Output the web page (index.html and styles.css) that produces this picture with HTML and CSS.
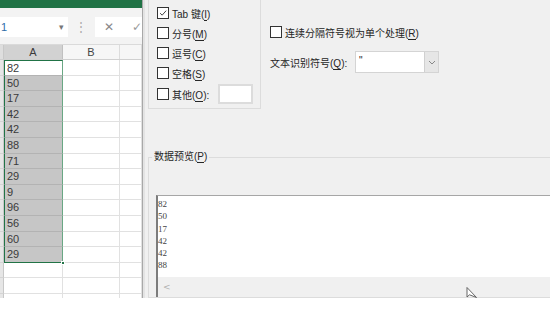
FILE: index.html
```html
<!DOCTYPE html>
<html lang="zh-CN">
<head>
  <meta charset="UTF-8" />
  <meta name="viewport" content="width=device-width, initial-scale=1.0"/>
  <title>文本分列向导</title>
  <link rel="stylesheet" href="styles.css">
</head>
<body>

  <div class="app">
    <div class="sheet">
      <div class="ribbon"></div>
      <div class="formula-bar">
        <div class="name-box"><span class="cell-ref">1</span><span class="caret">▾</span></div>
        <div class="bar-dots">⋮</div>
        <div class="formula-input">
          <span class="fx-btn">✕</span>
          <span class="fx-btn ok">✓</span>
        </div>
      </div>

      <div class="col-heads">
        <div class="corner"></div>
        <div class="col-head a sel">A</div>
        <div class="col-head b">B</div>
        <div class="col-head c"></div>
      </div>

      <div class="grid">
        <div class="row"><div class="rh"></div><div class="cell a sel first active">82</div><div class="cell b"></div><div class="cell c"></div></div>
        <div class="row"><div class="rh"></div><div class="cell a sel">50</div><div class="cell b"></div><div class="cell c"></div></div>
        <div class="row"><div class="rh"></div><div class="cell a sel">17</div><div class="cell b"></div><div class="cell c"></div></div>
        <div class="row"><div class="rh"></div><div class="cell a sel">42</div><div class="cell b"></div><div class="cell c"></div></div>
        <div class="row"><div class="rh"></div><div class="cell a sel">42</div><div class="cell b"></div><div class="cell c"></div></div>
        <div class="row"><div class="rh"></div><div class="cell a sel">88</div><div class="cell b"></div><div class="cell c"></div></div>
        <div class="row"><div class="rh"></div><div class="cell a sel">71</div><div class="cell b"></div><div class="cell c"></div></div>
        <div class="row"><div class="rh"></div><div class="cell a sel">29</div><div class="cell b"></div><div class="cell c"></div></div>
        <div class="row"><div class="rh"></div><div class="cell a sel">9</div><div class="cell b"></div><div class="cell c"></div></div>
        <div class="row"><div class="rh"></div><div class="cell a sel">96</div><div class="cell b"></div><div class="cell c"></div></div>
        <div class="row"><div class="rh"></div><div class="cell a sel">56</div><div class="cell b"></div><div class="cell c"></div></div>
        <div class="row"><div class="rh"></div><div class="cell a sel">60</div><div class="cell b"></div><div class="cell c"></div></div>
        <div class="row"><div class="rh"></div><div class="cell a sel last">29<span class="fill-handle"></span></div><div class="cell b"></div><div class="cell c"></div></div>
        <div class="row"><div class="rh"></div><div class="cell a"></div><div class="cell b"></div><div class="cell c"></div></div>
        <div class="row"><div class="rh"></div><div class="cell a"></div><div class="cell b"></div><div class="cell c"></div></div>
        <div class="row"><div class="rh"></div><div class="cell a"></div><div class="cell b"></div><div class="cell c"></div></div>
      </div>
    </div>

    <div class="divider"></div>

    <div class="dialog">
      <div class="top">
        <div class="delims">
          <label class="check-row"><span class="box checked"><svg viewBox="0 0 12 12" width="12" height="12"><path d="M2.5 6.2 L5 8.6 L9.8 3.2" fill="none" stroke="#333" stroke-width="1.1"/></svg></span><span>Tab 键(<u>I</u>)</span></label>
          <label class="check-row"><span class="box"></span><span>分号(<u>M</u>)</span></label>
          <label class="check-row"><span class="box"></span><span>逗号(<u>C</u>)</span></label>
          <label class="check-row"><span class="box"></span><span>空格(<u>S</u>)</span></label>
          <label class="check-row other"><span class="box"></span><span>其他(<u>O</u>):</span><span class="other-input"></span></label>
        </div>

        <div class="options">
          <label class="check-row"><span class="box"></span><span>连续分隔符号视为单个处理(<u>R</u>)</span></label>
          <div class="qualifier-row">
            <span class="qualifier-label">文本识别符号(<u>Q</u>):</span>
            <div class="combo">
              <span class="combo-value">"</span>
              <span class="combo-arrow"><svg viewBox="0 0 8 5" width="8" height="5"><path d="M1 1 L4 4 L7 1" fill="none" stroke="#888" stroke-width="1"/></svg></span>
            </div>
          </div>
        </div>
      </div>

      <fieldset class="preview-group">
        <legend>数据预览(<u>P</u>)</legend>
        <div class="preview-box">
          <div class="preview-text">
            <div>82</div>
            <div>50</div>
            <div>17</div>
            <div>42</div>
            <div>42</div>
            <div>88</div>
          </div>
          <div class="hscroll"><span class="scroll-left">&lt;</span></div>
          <svg class="cursor" viewBox="0 0 12 12" width="12" height="12"><path d="M1 0.5 L1 10 L3.5 7.8 L10.5 10.5 Z" fill="#fff" stroke="#555" stroke-width="0.9"/></svg>
        </div>
      </fieldset>
    </div>
  </div>

</body>
</html>
```

FILE: styles.css
```css
* {
  box-sizing: border-box;
}

body {
  margin: 0;
  width: 550px;
  height: 316px;
  background: #fff;
  overflow: hidden;
  font-family: "Liberation Sans", "Noto Sans CJK SC", sans-serif;
}

.app {
  display: flex;
  height: 298px;
}

/* ---- sheet ---- */

.sheet {
  width: 142px;
  display: flex;
  flex-direction: column;
  background: #fff;
  overflow: hidden;
}

.ribbon {
  height: 8px;
  background: #217346;
}

.formula-bar {
  height: 37px;
  background: #f3f3f3;
  display: flex;
  align-items: flex-start;
  padding-top: 9px;
  border-bottom: 1px solid #dadada;
}

.name-box {
  width: 68px;
  height: 20px;
  background: #fff;
  display: flex;
  align-items: center;
  justify-content: space-between;
  padding: 0 4px 0 1px;
  font-family: "Liberation Sans", sans-serif;
  font-size: 11px;
}

.cell-ref {
  color: #2f6da8;
}

.caret {
  color: #777;
  font-size: 9px;
}

.bar-dots {
  width: 27px;
  text-align: center;
  color: #aaa;
  font-size: 12px;
  line-height: 20px;
}

.formula-input {
  flex: 1;
  height: 20px;
  background: #fff;
  display: flex;
  align-items: center;
  padding-left: 9px;
  gap: 18px;
  font-family: "DejaVu Sans", sans-serif;
  font-size: 12px;
  color: #888;
}

.fx-btn.ok {
  color: #999;
}

.col-heads {
  display: flex;
  height: 15px;
  font-family: "Liberation Sans", sans-serif;
  font-size: 11px;
  color: #444;
  border-bottom: 1px solid #d0d0d0;
}

.corner {
  width: 4px;
  background: #dedede;
  border-right: 1px solid #c8c8c8;
}

.col-head {
  display: flex;
  align-items: center;
  justify-content: center;
  background: #f6f6f6;
  border-right: 1px solid #dcdcdc;
}

.col-head.sel {
  background: #d2d2d2;
  color: #3b3b3b;
  border-right-color: #c0c0c0;
}

.a { width: 59px; }
.b { width: 57px; }
.c { flex: 1; }

.grid {
  flex: 1;
  overflow: hidden;
}

.row {
  display: flex;
  height: 15.6px;
}

.rh {
  width: 4px;
  background: #e6e6e6;
  border-bottom: 1px solid #d4d4d4;
  border-right: 1px solid #c8c8c8;
}

.cell {
  border-right: 1px solid #e1e1e1;
  border-bottom: 1px solid #e1e1e1;
  font-family: "Liberation Sans", sans-serif;
  font-size: 11px;
  line-height: 14px;
  color: #3a3a3a;
  padding-left: 2px;
}

.cell.sel {
  position: relative;
  background: #c6c6c6;
  border-bottom-color: #b3b3b3;
  border-left: 1px solid #217346;
  border-right: 1px solid #6aa784;
}

.cell.active {
  background: #fff;
}

.cell.first {
  border-top: 1px solid #217346;
}

.cell.last {
  border-bottom: 1px solid #217346;
}

.fill-handle {
  position: absolute;
  right: -3px;
  bottom: -3px;
  width: 4px;
  height: 4px;
  background: #217346;
  border: 1px solid #fff;
}

.divider {
  width: 3px;
  background: #e3e3e3;
  border-left: 1px solid #a8a8a8;
}

/* ---- dialog ---- */

.dialog {
  flex: 1;
  background: #f0f0f0;
  display: flex;
  flex-direction: column;
  padding-left: 3px;
  font-size: 10px;
  color: #262626;
  text-autospace: no-autospace;
}

.dialog u {
  text-decoration: none;
  border-bottom: 1px solid currentColor;
  line-height: 1;
}

.top {
  display: flex;
  height: 110px;
}

.delims {
  width: 113px;
  border: 1px solid #dcdcdc;
  border-top: none;
  padding: 3px 0 0 8px;
}

.check-row {
  display: flex;
  align-items: center;
  height: 20px;
  gap: 3px;
  white-space: nowrap;
}

.check-row.other {
  height: 22px;
}

.box {
  width: 12px;
  height: 12px;
  background: #fff;
  border: 1px solid #333;
  display: flex;
  align-items: center;
  justify-content: center;
  flex-shrink: 0;
}

.box svg {
  display: block;
}

.other-input {
  width: 35px;
  height: 20px;
  margin-left: 6px;
  background: #fff;
  border: 2px solid #dcdcdc;
}

.options {
  padding: 22px 0 0 9px;
}

.qualifier-row {
  display: flex;
  align-items: center;
  height: 22px;
  margin-top: 9px;
}

.qualifier-label {
  width: 85px;
  white-space: nowrap;
}

.combo {
  width: 84px;
  height: 22px;
  background: #fff;
  border: 1px solid #d4d4d4;
  display: flex;
}

.combo-value {
  flex: 1;
  padding: 0 0 0 3px;
  font-family: "Liberation Sans", sans-serif;
  font-size: 10px;
  line-height: 18px;
}

.combo-arrow {
  width: 14px;
  background: #e6e6e6;
  border-left: 1px solid #d0d0d0;
  display: flex;
  align-items: center;
  justify-content: center;
}

.preview-group {
  flex: 1;
  margin: 41px 0 0 0;
  padding: 31px 0 0 7px;
  border: 1px solid #dcdcdc;
  border-right: none;
  min-width: 0;
}

.preview-group legend {
  margin-left: -4px;
  padding: 0 2px;
  font-size: 10px;
  line-height: 14px;
}

.preview-box {
  position: relative;
  height: 102px;
  background: #fff;
  border-left: 2px solid #7c7c7c;
  border-top: 1px solid #a6a6a6;
  display: flex;
  flex-direction: column;
}

.preview-text {
  flex: 1;
  padding: 2px 0 0 0;
  font-family: "Liberation Serif", serif;
  font-size: 9px;
  line-height: 12.3px;
  color: #444;
}

.hscroll {
  height: 20px;
  background: #f0f0f0;
  display: flex;
  align-items: center;
  padding-left: 5px;
  font-family: "DejaVu Sans", sans-serif;
  font-size: 9px;
  color: #b0b0b0;
}

.cursor {
  position: absolute;
  left: 308px;
  bottom: -2px;
}
```
